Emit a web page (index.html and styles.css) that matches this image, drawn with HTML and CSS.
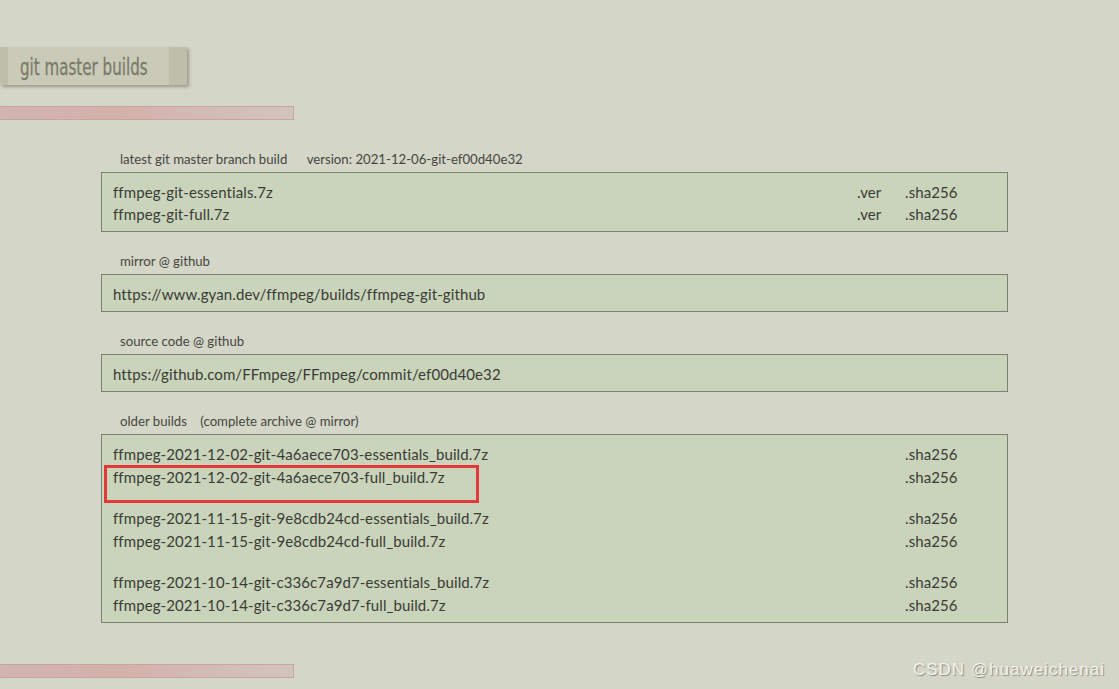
FILE: index.html
```html
<!DOCTYPE html>
<html lang="en">
<head>
  <meta charset="UTF-8" />
  <title>git master builds</title>
  <link rel="stylesheet" href="styles.css">
</head>
<body>
  <div class="tab"><h1>git master builds</h1></div>
  <div class="bar"></div>

  <main class="builds">
    <section>
      <p class="label">latest git master branch build <span class="extra">version: 2021-12-06-git-ef00d40e32</span></p>
      <div class="box">
        <div class="row"><span>ffmpeg-git-essentials.7z</span><span>.ver</span><span>.sha256</span></div>
        <div class="row"><span>ffmpeg-git-full.7z</span><span>.ver</span><span>.sha256</span></div>
      </div>
    </section>

    <section>
      <p class="label">mirror @ github</p>
      <div class="box">
        <div class="row"><span>https://www.gyan.dev/ffmpeg/builds/ffmpeg-git-github</span></div>
      </div>
    </section>

    <section>
      <p class="label">source code @ github</p>
      <div class="box">
        <div class="row"><span>https://github.com/FFmpeg/FFmpeg/commit/ef00d40e32</span></div>
      </div>
    </section>

    <section>
      <p class="label">older builds <span class="extra short">(complete archive @ mirror)</span></p>
      <div class="box older">
        <div class="row"><span>ffmpeg-2021-12-02-git-4a6aece703-essentials_build.7z</span><span></span><span>.sha256</span></div>
        <div class="row marked"><span>ffmpeg-2021-12-02-git-4a6aece703-full_build.7z</span><span></span><span>.sha256</span></div>
        <div class="gap"></div>
        <div class="row"><span>ffmpeg-2021-11-15-git-9e8cdb24cd-essentials_build.7z</span><span></span><span>.sha256</span></div>
        <div class="row"><span>ffmpeg-2021-11-15-git-9e8cdb24cd-full_build.7z</span><span></span><span>.sha256</span></div>
        <div class="gap"></div>
        <div class="row"><span>ffmpeg-2021-10-14-git-c336c7a9d7-essentials_build.7z</span><span></span><span>.sha256</span></div>
        <div class="row"><span>ffmpeg-2021-10-14-git-c336c7a9d7-full_build.7z</span><span></span><span>.sha256</span></div>
      </div>
    </section>
  </main>

  <div class="bar"></div>
  <div class="watermark">CSDN @huaweichenai</div>
</body>
</html>
```

FILE: styles.css
```css
body {
  margin: 0;
  background-color: #d4d6c8;
  font-family: Lato, "Open Sans", sans-serif;
  color: #3b3b36;
  height: 689px;
  overflow: hidden;
  position: relative;
}

/* heading tab */
.tab {
  margin-top: 47px;
  width: 187px;
  height: 38px;
  white-space: nowrap;
  background: linear-gradient(to right, #bdbfab 0, #bdbfab 8px, #c9cab8 8px, #c9cab8 169px, #bdbfab 169px);
  box-shadow: 2px 2px 3px rgba(90, 85, 70, 0.45);
}
.tab h1 {
  display: inline-block;
  margin: 0;
  margin-left: 20px;
  font-family: "DejaVu Sans Condensed", "DejaVu Sans", sans-serif;
  font-weight: normal;
  font-size: 23px;
  line-height: 40px;
  color: #7b7b6a;
  transform: scaleX(0.73);
  transform-origin: left center;
  -webkit-text-stroke: 0.3px #7b7b6a;
}

.bar {
  margin-top: 21px;
  width: 293px;
  height: 12px;
  border: 1px solid #c9a6a3;
  border-left: none;
  background: linear-gradient(to right, #d0b5b1, #d5b0aa 40%, #d3bdb7 75%, #d2c4bd);
}
.builds + .bar { margin-top: 41px; }

.builds {
  margin-top: 30px;
  margin-left: 101px;
  width: 907px;
}
.builds section + section { margin-top: 20px; }

.label {
  margin: 0 0 4px 19px;
  font-size: 13.2px;
  line-height: 18px;
  color: #46463f;
}
.label .extra { margin-left: 16px; }
.label .extra.short { margin-left: 10px; }

.box {
  border: 1px solid #7d8175;
  background-color: #c9d4bb;
  padding: 8px 0 6px 11px;
}
.row {
  display: grid;
  grid-template-columns: 1fr 48px 102px;
  font-size: 15px;
  line-height: 22px;
  letter-spacing: 0.1px;
}
.older .row { line-height: 22.5px; }
.older .gap { height: 19px; }

.marked { position: relative; }
.marked::after {
  content: "";
  position: absolute;
  left: -9px;
  top: -1px;
  width: 369px;
  height: 32px;
  border: 3px solid #e5383a;
}

.watermark {
  position: absolute;
  right: 14px;
  bottom: 9px;
  font-family: "Liberation Sans", Arial, sans-serif;
  font-size: 17px;
  letter-spacing: 1px;
  color: #f3f3ee;
  text-shadow: 1px 1px 1px #8a8a80;
}
```
